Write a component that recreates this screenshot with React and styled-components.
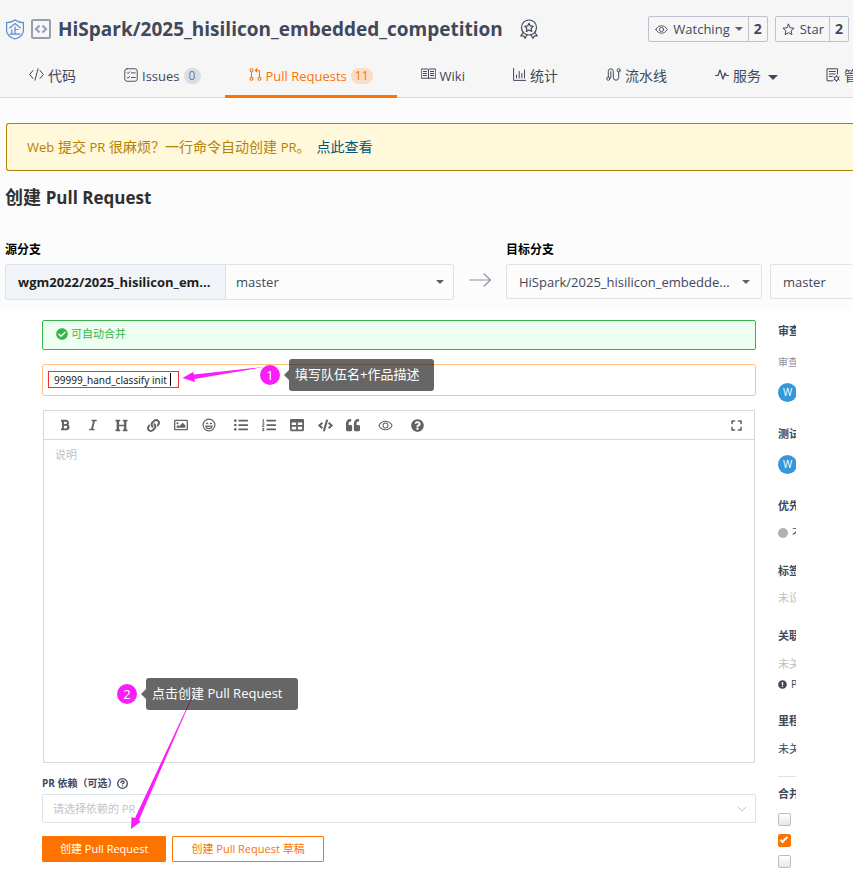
import React from "react";
import styled, { createGlobalStyle, css } from "styled-components";
import {
  FaBold, FaItalic, FaHeading, FaLink, FaListUl, FaListOl, FaTable, FaCode,
  FaQuoteLeft, FaQuestionCircle, FaCheckCircle, FaExclamationCircle, FaRegImage,
} from "react-icons/fa";

const sans = `"Open Sans", "Noto Sans CJK SC", sans-serif`;
const ink = "#40485b";
const orange = "#fe7300";
const magenta = "#f91ef9";

const Global = createGlobalStyle`
  *, *::before, *::after { box-sizing: border-box; }
  body { margin: 0; background: #fff; color: ${ink}; font: 14px/20px ${sans}; overflow-x: hidden; }
  button, input, select, textarea { font: inherit; color: inherit; margin: 0; }
  h1, h2, h3, p { margin: 0; }
  svg { display: block; flex: none; }
`;

/* ---------- header ---------- */
const Header = styled.header`
  background: #f6f6f6;
  border-bottom: 1px solid #dcdde0;
`;
const TitleRow = styled.div`
  display: flex;
  align-items: center;
  height: 58px;
  padding: 0 4px 0 5px;
`;
const RepoIcons = styled.div`
  display: flex;
  align-items: center;
  gap: 6px;
  margin-right: 7px;
`;
const RepoName = styled.h1`
  font-size: 19px;
  line-height: 28px;
  font-weight: 700;
  white-space: nowrap;
  margin-right: 16px;
`;
const RepoActions = styled.div`
  display: flex;
  gap: 7px;
  margin-left: auto;
`;
const SplitButton = styled.div`
  display: flex;
  height: 26px;
  border: 1px solid #bfc1d0;
  border-radius: 2px;
  background: #f6f6f6;
`;
const ActionButton = styled.button`
  display: flex;
  align-items: center;
  gap: 5px;
  padding: 0 5px 0 6px;
  border: 0;
  background: none;
  font-size: 13px;
  white-space: nowrap;
`;
const ActionCount = styled.a`
  display: flex;
  align-items: center;
  justify-content: center;
  width: 19px;
  border-left: 1px solid #bfc1d0;
  color: ${ink};
  font-size: 14px;
  font-weight: 700;
  text-decoration: none;
`;
const Tabs = styled.nav`
  display: flex;
  height: 40px;
  margin-bottom: -1px;
  padding-left: 5px;
  overflow: hidden;
`;
const Tab = styled.a`
  display: flex;
  flex: none;
  gap: 4px;
  height: 40px;
  padding: 8px 24px 0;
  color: ${p => (p.$active ? orange : ink)};
  border-bottom: 3px solid ${p => (p.$active ? orange : "transparent")};
  text-decoration: none;
  white-space: nowrap;
  svg { margin-top: 2px; }
`;
const TabText = styled.span`
  font-size: ${p => (p.$latin ? 13 : 14)}px;
  line-height: 20px;
`;
const Count = styled.span`
  height: 16px;
  min-width: 17px;
  margin-top: 2px;
  padding: 0 4px;
  border-radius: 8px;
  background: ${p => (p.$active ? "#fbdcc5" : "#dcdde2")};
  color: ${p => (p.$active ? orange : "#6c7b9b")};
  font-size: 12px;
  line-height: 16px;
  text-align: center;
`;

/* ---------- branches ---------- */
const BranchArea = styled.section`
  background: #fcfcfc;
  padding: 25px 0 10px 5px;
  overflow: hidden;
`;
const Tip = styled.div`
  margin-left: 1px;
  height: 48px;
  padding: 13px 20px;
  border: 1px solid #b58105;
  border-right: 0;
  border-radius: 3px 0 0 3px;
  background: #fff8db;
  color: #b58105;
  white-space: nowrap;
  a { color: #01577a; text-decoration: none; margin-left: 6px; }
`;
const PageTitle = styled.h2`
  margin: 13px 0 29px;
  color: #303030;
  font-size: 18px;
  line-height: 26px;
  font-weight: 700;
`;
const Latin = styled.span`
  font-size: ${p => p.$size}px;
`;
const BranchGrid = styled.div`
  display: grid;
  grid-template-columns: minmax(0, 449fr) 52px minmax(0, 256fr) minmax(0, 91fr);
  align-items: start;
`;
const BranchLabel = styled.label`
  grid-column: ${p => p.$column};
  color: #000;
  font-size: 12px;
  line-height: 20px;
  font-weight: 700;
  margin: 0 0 4px;
`;
const SourceBox = styled.div`
  grid-column: 1;
  display: grid;
  grid-template-columns: minmax(0, 220fr) minmax(0, 227fr);
  height: 36px;
  border: 1px solid #dce3e8;
  border-radius: 2px;
`;
const SourceRepo = styled.div`
  padding: 7px 8px 7px 12px;
  background: #f0f4f8;
  color: #1f1f1f;
  border-right: 1px solid #dce3e8;
  font-size: 13px;
  font-weight: 700;
  white-space: nowrap;
  overflow: hidden;
`;
const SelectWrap = styled.div`
  position: relative;
  display: flex;
  min-width: 0;
  ${p => p.$boxed && css`
    height: 35px;
    border: 1px solid #dce3e8;
    border-radius: 2px;
  `}
  ${p => p.$open && css`
    margin-left: 8px;
    border-right: 0;
  `}
`;
const Select = styled.select`
  appearance: none;
  width: 100%;
  border: 0;
  background: none;
  padding: 0 ${p => (p.$wide ? 12 : 10)}px;
  font-size: 13px;
`;
const Caret = styled.i`
  ${p => p.$over && css`
    position: absolute;
    right: ${p.$over}px;
    top: 15px;
    pointer-events: none;
  `}
  border: 4px solid transparent;
  border-top: 4px solid #596275;
  border-bottom: 0;
`;
const MenuCaret = styled(Caret)`
  border-width: 5px 5px 0;
  border-top-color: ${ink};
  height: 5px;
  margin: 9px 0 0 3px;
`;
const ArrowCell = styled.div`
  display: flex;
  justify-content: center;
  padding-top: 9px;
`;

/* ---------- form ---------- */
const Body = styled.main`
  display: flex;
  align-items: flex-start;
  gap: 22px;
  padding: 10px 57px 20px 42px;
`;
const Form = styled.form`
  position: relative;
  flex: 1;
  min-width: 0;
  font-size: 11px;
`;
const MergeState = styled.div`
  display: flex;
  gap: 3px;
  height: 30px;
  padding: 3px 13px;
  border: 1px solid #37b34a;
  border-radius: 2px;
  background: #edfff1;
  color: #37b34a;
  svg { margin-top: 4px; }
`;
const TitleInput = styled.input`
  display: block;
  width: 100%;
  height: 32px;
  margin-top: 14px;
  padding: 0 11px;
  border: 1px solid #ffbd80;
  border-radius: 3px;
  outline: 0;
  color: #222;
  font-family: "Noto Sans", "Noto Sans CJK SC", sans-serif;
  font-size: 10px;
`;
const Editor = styled.div`
  margin: 14px 1px 0;
  border: 1px solid #d8d8d8;
`;
const Toolbar = styled.div`
  display: flex;
  align-items: center;
  gap: 4px;
  height: 29px;
  padding: 0 4px 0 7px;
  border-bottom: 1px solid #d8d8d8;
  color: #626262;
`;
const ToolGroup = styled.div`
  display: flex;
  margin-left: ${p => (p.$end ? "auto" : 0)};
`;
const Tool = styled.button`
  display: flex;
  align-items: center;
  justify-content: center;
  width: 28px;
  height: 28px;
  padding: 0;
  border: 0;
  background: none;
`;
const Description = styled.textarea`
  display: block;
  width: 100%;
  height: 322px;
  padding: 5px 11px;
  border: 0;
  outline: 0;
  resize: none;
  background: none;
  &::placeholder { color: #bfbfbf; }
`;
const DependLabel = styled.label`
  display: flex;
  align-items: center;
  margin-top: 10px;
  height: 20px;
  font-size: 10px;
  font-weight: 700;
`;
const DependWrap = styled.div`
  position: relative;
  height: 29px;
  margin-top: 1px;
  border: 1px solid #dce3e8;
  border-radius: 2px;
  svg { position: absolute; right: 8px; top: 9px; pointer-events: none; }
`;
const DependSelect = styled.select`
  appearance: none;
  width: 100%;
  height: 100%;
  padding: 0 10px;
  border: 0;
  background: none;
  color: #c4c4c8;
`;
const Buttons = styled.div`
  display: flex;
  gap: 6px;
  margin-top: 13px;
`;
const SubmitButton = styled.button`
  height: 26px;
  padding: 0 ${p => (p.$primary ? 17 : 18)}px;
  border: 1px solid ${orange};
  border-radius: 1px;
  background: ${p => (p.$primary ? orange : "#fff")};
  color: ${p => (p.$primary ? "#fff" : orange)};
  white-space: nowrap;
`;

/* ---------- annotations over the form ---------- */
const RedFrame = styled.div`
  position: absolute;
  left: 6px;
  top: 51px;
  width: 131px;
  height: 17px;
  border: 1px solid #f03030;
  pointer-events: none;
  &::after {
    content: "";
    position: absolute;
    right: 7px;
    top: 1px;
    width: 1px;
    height: 13px;
    background: #000;
  }
`;
const ArrowLayer = styled.svg`
  position: absolute;
  left: 0;
  top: 0;
  pointer-events: none;
`;
const Note = styled.div`
  position: absolute;
  left: ${p => p.$x}px;
  top: ${p => p.$y}px;
  display: flex;
  align-items: center;
  gap: 9px;
`;
const NoteNumber = styled.span`
  width: 20px;
  height: 20px;
  border-radius: 50%;
  background: ${magenta};
  color: #fff;
  font-size: 13px;
  line-height: 20px;
  text-align: center;
`;
const NoteText = styled.span`
  position: relative;
  height: 32px;
  padding: 0 15px 0 6px;
  border-radius: 3px;
  background: rgba(0, 0, 0, 0.6);
  color: #fff;
  font-size: 13px;
  line-height: 30px;
  white-space: nowrap;
  &::before {
    content: "";
    position: absolute;
    left: -5px;
    top: 11px;
    border: 5px solid transparent;
    border-right-color: rgba(0, 0, 0, 0.6);
    border-left: 0;
  }
`;

/* ---------- side column ---------- */
const Side = styled.aside`
  width: 18px;
  padding-top: 1px;
  overflow: hidden;
  white-space: nowrap;
  line-height: 20px;
`;
const SideGroup = styled.section`
  height: ${p => p.$height}px;
`;
const SideTitle = styled.h3`
  font-size: 11px;
  line-height: 20px;
  font-weight: 700;
`;
const SideText = styled.p`
  display: flex;
  align-items: center;
  gap: 4px;
  margin-top: ${p => p.$gap}px;
  height: 20px;
  color: ${p => p.$color || ink};
  font-size: ${p => (p.$small ? 10 : 11)}px;
`;
const Avatar = styled.span`
  display: block;
  width: 19px;
  height: 19px;
  margin-top: ${p => p.$gap}px;
  border-radius: 50%;
  background: #3498db;
  color: #fff;
  font-size: 10px;
  line-height: 19px;
  text-align: center;
`;
const Dot = styled.i`
  flex: none;
  width: 10px;
  height: 10px;
  border-radius: 50%;
  background: #b0b0b0;
`;
const Options = styled.section`
  border-top: 1px solid #dce3e8;
  padding-top: 7px;
`;
const Check = styled.input`
  appearance: none;
  display: block;
  width: 13px;
  height: 13px;
  margin: 0 0 8px;
  border: 1px solid #bbbbc0;
  border-radius: 2px;
  background: linear-gradient(#fff, #e6e6ec);
  &:first-of-type { margin-top: 9px; }
  &:checked {
    border-color: ${orange};
    background: ${orange};
  }
  &:checked::after {
    content: "";
    display: block;
    width: 8px;
    height: 4px;
    margin: 2px 0 0 1px;
    border: solid #fff;
    border-width: 0 0 2px 2px;
    transform: rotate(-45deg);
  }
`;

/* ---------- icons ---------- */
const Line = ({ w = 16, h = w, box = "0 0 16 16", sw = 1, children }) => (
  <svg width={w} height={h} viewBox={box} fill="none" stroke="currentColor" strokeWidth={sw} strokeLinecap="round" strokeLinejoin="round" aria-hidden="true">
    {children}
  </svg>
);
const Shield = () => (
  <svg width="20" height="21" viewBox="0 0 20 21" fill="none" stroke="#5b8ccb" strokeWidth="1.2" aria-hidden="true">
    <path d="M10 1C7.5 2.8 4.6 3.6 1.6 3.7v7.8c0 4 3.4 6.9 8.4 8.5 5-1.6 8.4-4.5 8.4-8.5V3.7C15.4 3.6 12.5 2.8 10 1z" />
    <path d="M4.3 9.3L10 4.6l5.7 4.7M10 7.5v7.5M10 10.500h3.5M6.8 10.500V15M4.5 15.200h11" />
  </svg>
);
const RepoGlyph = () => (
  <svg width="20" height="20" viewBox="0 0 20 20" fill="none" stroke="#9a9cb0" strokeWidth="2" aria-hidden="true">
    <rect x="1" y="1" width="18" height="18" rx="1" />
    <path d="M8.500 6.500L5 10l3.500 3.500M11.500 6.500L15 10l-3.500 3.500" />
  </svg>
);
const Medal = () => (
  <Line w={20} h={21} box="0 0 20 21" sw={1.2}>
    <circle cx="10" cy="8.500" r="7.500" />
    <path d="M10 4.200l1.300 2.700 3 .4-2.200 2.100.6 3-2.700-1.500-2.700 1.500.6-3-2.200-2.100 3-.4z" />
    <path d="M4 13.500L1.800 17l2.800-.2 1.400 2.500 2.200-3.500M16 13.500l2.200 3.500-2.800-.2-1.400 2.500-2.200-3.500" />
  </Line>
);
const Eye = ({ size = 13 }) => (
  <Line w={size} h={size} box="0 0 16 16" sw={1.1}>
    <path d="M1 8c1.500-3 4-4.500 7-4.500S13.500 5 15 8c-1.500 3-4 4.500-7 4.500S2.500 11 1 8z" />
    <circle cx="8" cy="8" r="2.600" />
  </Line>
);
const Star = () => (
  <Line w={13} sw={1.2}>
    <path d="M8 1.500l2 4.400 4.800.5-3.600 3.200 1 4.700L8 11.900l-4.200 2.400 1-4.700L1.200 6.400 6 5.900z" />
  </Line>
);
const CodeTab = () => (
  <Line w={15} h={13} box="0 0 15 13"><path d="M4 2.500L.7 6.500 4 10.500M11 2.500l3.300 4-3.300 4M9 .8L6 12.200" /></Line>
);
const IssueTab = () => (
  <Line w={14} h={14} box="0 0 15 15">
    <rect x=".8" y=".8" width="13.400" height="13.400" rx="2.500" />
    <path d="M3.300 5l1 1 1.700-2M3.300 10l1 1 1.700-2M8 5.200h4M8 10.200h4" />
  </Line>
);
const PullTab = () => (
  <Line w={13} h={13} box="0 0 13 13" sw={1.1}>
    <circle cx="2.500" cy="2.300" r="1.500" /><circle cx="2.500" cy="10.700" r="1.500" /><circle cx="10.500" cy="10.700" r="1.500" />
    <path d="M2.500 4v5M10.500 9V3.300q0-1-1-1H6.300M8 .6L6.300 2.300 8 4" />
  </Line>
);
const WikiTab = () => (
  <Line w={15} h={12} box="0 0 15 12">
    <path d="M.6 1h5.900q1 0 1 1v9q0-.8-1-.8H.6zM14.400 1H8.500q-1 0-1 1v9q0-.8 1-.8h5.900z" />
    <path d="M2.300 3.500H5.500M2.300 5.500H5.500M2.300 7.500H5.500M9.500 3.500h3.200M9.500 5.500h3.200M9.500 7.500h3.200" />
  </Line>
);
const StatTab = () => (
  <Line w={13} h={13} box="0 0 13 13"><path d="M.6.5v11.900h12M3.500 10V7M6.200 10V3.500M8.900 10V5.500M11.500 10V2" /></Line>
);
const PipeTab = () => (
  <Line w={15} h={13} box="0 0 15 13">
    <circle cx="2.300" cy="10.700" r="1.600" /><circle cx="12.700" cy="2.300" r="1.600" />
    <path d="M2.300 9V3.300a2.500 2.500 0 0 1 5 0v6.200a2.700 2.700 0 0 0 5.400 0V4M4.800 3.500v6" />
  </Line>
);
const PulseTab = () => (
  <Line w={14} h={13} box="0 0 14 13" sw={1.2}><path d="M.6 7.500h2.400L5 2l3 9 2-6 1.200 2.500h2.200" /></Line>
);
const ManageTab = () => (
  <Line w={14} h={14} box="0 0 14 14">
    <path d="M11.500 6V.8H1v12h5.500M3.300 3.500h6M3.300 6h6M3.300 8.500h3" />
    <circle cx="10.500" cy="10.500" r="2" /><path d="M10.500 7.500v1M10.500 12.500v1M7.800 9l.9.500M12.300 11.500l.9.500M7.800 12l.9-.5M12.300 9.500l.9-.5" />
  </Line>
);
const Smile = () => (
  <Line w={14} box="0 0 14 14" sw={1.2}>
    <circle cx="7" cy="7" r="5.900" />
    <path d="M3.800 8.200h6.400q-.6 2.500-3.200 2.500T3.800 8.200zM4.500 5.500q.6-.8 1.200 0M8.300 5.500q.6-.8 1.200 0" />
  </Line>
);
const Expand = () => (
  <Line w={11} box="0 0 11 11" sw={1.6}><path d="M1 3.500V1h2.500M7.500 1H10v2.500M10 7.500V10H7.500M3.500 10H1V7.500" /></Line>
);
const Question = () => (
  <Line w={11} box="0 0 11 11" sw={1.3}>
    <circle cx="5.500" cy="5.500" r="4.800" />
    <path d="M4 4.500q0-1.500 1.500-1.500T7 4.300q0 .8-1.500 1.500M5.500 7.900v.1" />
  </Line>
);

const tabs = [
  { text: "代码", icon: <CodeTab /> },
  { text: "Issues", icon: <IssueTab />, count: 0, latin: true },
  { text: "Pull Requests", icon: <PullTab />, count: 11, latin: true, active: true },
  { text: "Wiki", icon: <WikiTab />, latin: true },
  { text: "统计", icon: <StatTab /> },
  { text: "流水线", icon: <PipeTab /> },
  { text: "服务", icon: <PulseTab />, menu: true },
  { text: "管理", icon: <ManageTab /> },
];

const tools = [
  [["粗体", <FaBold size={12} />], ["斜体", <FaItalic size={12} />], ["标题", <FaHeading size={13} />]],
  [["链接", <FaLink size={13} />], ["图片", <FaRegImage size={14} />], ["表情", <Smile />]],
  [["无序列表", <FaListUl size={14} />], ["有序列表", <FaListOl size={14} />], ["表格", <FaTable size={14} />], ["代码", <FaCode size={15} />], ["引用", <FaQuoteLeft size={14} />]],
  [["预览", <Eye size={15} />]],
  [["帮助", <FaQuestionCircle size={13} />]],
];

export default function App() {
  return (
    <>
      <Global />
      <Header>
        <TitleRow>
          <RepoIcons><Shield /><RepoGlyph /></RepoIcons>
          <RepoName>HiSpark/2025_hisilicon_embedded_competition</RepoName>
          <Medal />
          <RepoActions>
            <SplitButton>
              <ActionButton type="button"><Eye />Watching<Caret /></ActionButton>
              <ActionCount href="#watchers">2</ActionCount>
            </SplitButton>
            <SplitButton>
              <ActionButton type="button"><Star />Star</ActionButton>
              <ActionCount href="#stars">2</ActionCount>
            </SplitButton>
          </RepoActions>
        </TitleRow>
        <Tabs>
          {tabs.map(t => (
            <Tab key={t.text} href="#tab" $active={t.active}>
              {t.icon}
              <TabText $latin={t.latin}>{t.text}</TabText>
              {t.count !== undefined && <Count $active={t.active}>{t.count}</Count>}
              {t.menu && <MenuCaret />}
            </Tab>
          ))}
        </Tabs>
      </Header>

      <BranchArea>
        <Tip>
          <Latin $size={13}>Web</Latin> 提交 <Latin $size={13}>PR</Latin> 很麻烦？一行命令自动创建 <Latin $size={13}>PR</Latin>。
          <a href="#cli">点此查看</a>
        </Tip>
        <PageTitle>创建 <Latin $size={17}>Pull Request</Latin></PageTitle>
        <BranchGrid>
          <BranchLabel $column="1" htmlFor="source">源分支</BranchLabel>
          <BranchLabel $column="3 / 5" htmlFor="target">目标分支</BranchLabel>
          <SourceBox>
            <SourceRepo>wgm2022/2025_hisilicon_em...</SourceRepo>
            <SelectWrap>
              <Select id="source"><option>master</option></Select>
              <Caret $over={9} />
            </SelectWrap>
          </SourceBox>
          <ArrowCell>
            <Line w={22} h={14} box="0 0 22 14" sw={1.2}>
              <path stroke="#9094a6" d="M.5 7h21M15 1l6.500 6L15 13" />
            </Line>
          </ArrowCell>
          <SelectWrap $boxed>
            <Select id="target" $wide><option>HiSpark/2025_hisilicon_embedde...</option></Select>
            <Caret $over={11} />
          </SelectWrap>
          <SelectWrap $boxed $open>
            <Select $wide aria-label="目标分支名"><option>master</option></Select>
          </SelectWrap>
        </BranchGrid>
      </BranchArea>

      <Body>
        <Form onSubmit={e => e.preventDefault()}>
          <MergeState><FaCheckCircle size={12} />可自动合并</MergeState>
          <TitleInput aria-label="标题" defaultValue="99999_hand_classify init" />
          <Editor>
            <Toolbar>
              {tools.map((group, i) => (
                <ToolGroup key={i}>
                  {group.map(([name, icon]) => <Tool key={name} type="button" aria-label={name}>{icon}</Tool>)}
                </ToolGroup>
              ))}
              <ToolGroup $end><Tool type="button" aria-label="全屏"><Expand /></Tool></ToolGroup>
            </Toolbar>
            <Description aria-label="说明" placeholder="说明" />
          </Editor>
          <DependLabel htmlFor="depend">PR 依赖（可选）<Question /></DependLabel>
          <DependWrap>
            <DependSelect id="depend"><option>请选择依赖的 PR</option></DependSelect>
            <Line w={10} h={10} box="0 0 10 10"><path stroke="#c0c4cc" d="M1 3l4 4 4-4" /></Line>
          </DependWrap>
          <Buttons>
            <SubmitButton $primary type="submit">创建 Pull Request</SubmitButton>
            <SubmitButton type="button">创建 Pull Request 草稿</SubmitButton>
          </Buttons>

          <RedFrame />
          <ArrowLayer width="300" height="520" viewBox="0 0 300 520" fill={magenta} aria-hidden="true">
            <path d="M222 47L152 54.500 151 52 140.500 58 153 62 152.500 59z" />
            <path d="M155 366L93 498 89.500 497 89 509 98.500 502 97 500z" />
          </ArrowLayer>
          <Note $x={218} $y={39}><NoteNumber>1</NoteNumber><NoteText>填写队伍名+作品描述</NoteText></Note>
          <Note $x={75} $y={358}><NoteNumber>2</NoteNumber><NoteText>点击创建 Pull Request</NoteText></Note>
        </Form>

        <Side>
          <SideGroup $height={103}>
            <SideTitle>审查</SideTitle>
            <SideText $small $gap={11} $color="#8c92a4">审查</SideText>
            <Avatar $gap={11}>W</Avatar>
          </SideGroup>
          <SideGroup $height={72}>
            <SideTitle>测试</SideTitle>
            <Avatar $gap={11}>W</Avatar>
          </SideGroup>
          <SideGroup $height={65}>
            <SideTitle>优先</SideTitle>
            <SideText $gap={7}><Dot />不</SideText>
          </SideGroup>
          <SideGroup $height={65}>
            <SideTitle>标签</SideTitle>
            <SideText $gap={7} $color="#bfbfbf">未设</SideText>
          </SideGroup>
          <SideGroup $height={85}>
            <SideTitle>关联</SideTitle>
            <SideText $gap={8} $color="#bfbfbf">未关</SideText>
            <SideText $small $gap={0}><FaExclamationCircle size={9} />P</SideText>
          </SideGroup>
          <SideGroup $height={65}>
            <SideTitle>里程</SideTitle>
            <SideText $gap={8}>未关</SideText>
          </SideGroup>
          <Options>
            <SideTitle>合并</SideTitle>
            <Check type="checkbox" aria-label="合并选项一" />
            <Check type="checkbox" aria-label="合并选项二" defaultChecked />
            <Check type="checkbox" aria-label="合并选项三" />
          </Options>
        </Side>
      </Body>
    </>
  );
}
